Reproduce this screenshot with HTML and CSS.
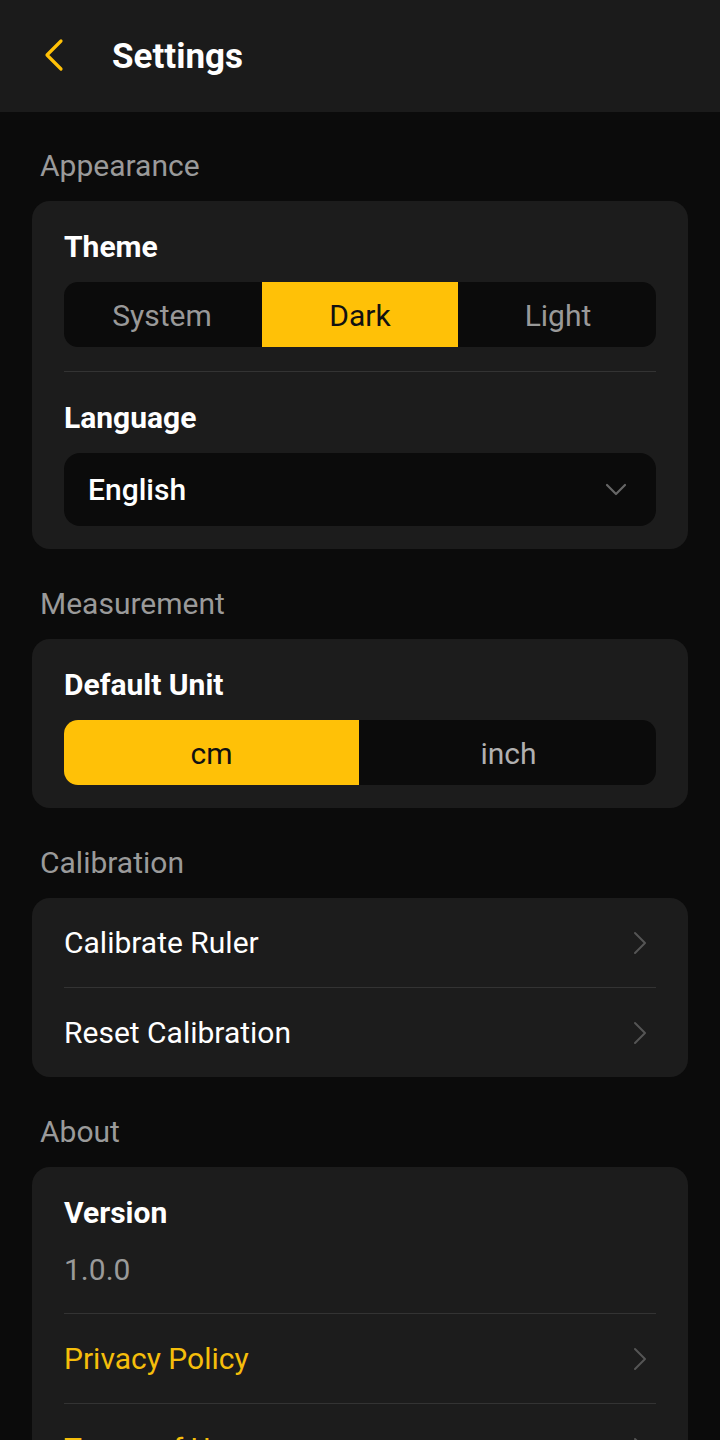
FILE: index.html
```html
<!DOCTYPE html>
<html lang="en">
<head>
  <meta charset="UTF-8">
  <meta name="viewport" content="width=device-width, initial-scale=1.0">
  <title>Settings</title>
  <link rel="stylesheet" href="styles.css">
</head>
<body>
  <header class="topbar">
    <a href="#" class="back">
      <svg width="24" height="36" viewBox="0 0 24 36">
        <polyline points="17,4 3,18 17,32" fill="none" stroke="#ffc107" stroke-width="3.2" stroke-linecap="round" stroke-linejoin="round"/>
      </svg>
    </a>
    <h1>Settings</h1>
  </header>

  <main class="content">
    <h3 class="section-label">Appearance</h3>
    <div class="card">
      <div class="card-title">Theme</div>
      <div class="segmented">
        <button class="seg">System</button>
        <button class="seg active">Dark</button>
        <button class="seg">Light</button>
      </div>
      <div class="divider"></div>
      <div class="card-title">Language</div>
      <div class="select">
        <span>English</span>
        <svg width="24" height="14" viewBox="0 0 24 14">
          <polyline points="3,2 12,11 21,2" fill="none" stroke="#666" stroke-width="2.2" stroke-linecap="round" stroke-linejoin="round"/>
        </svg>
      </div>
    </div>

    <h3 class="section-label">Measurement</h3>
    <div class="card">
      <div class="card-title">Default Unit</div>
      <div class="segmented">
        <button class="seg active">cm</button>
        <button class="seg light">inch</button>
      </div>
    </div>

    <h3 class="section-label">Calibration</h3>
    <div class="card list">
      <a href="#" class="row">
        <span>Calibrate Ruler</span>
        <svg class="chev" width="16" height="24" viewBox="0 0 16 24"><polyline points="3,2 13,12 3,22" fill="none" stroke="#555" stroke-width="2" stroke-linecap="round" stroke-linejoin="round"/></svg>
      </a>
      <div class="divider flat"></div>
      <a href="#" class="row">
        <span>Reset Calibration</span>
        <svg class="chev" width="16" height="24" viewBox="0 0 16 24"><polyline points="3,2 13,12 3,22" fill="none" stroke="#555" stroke-width="2" stroke-linecap="round" stroke-linejoin="round"/></svg>
      </a>
    </div>

    <h3 class="section-label">About</h3>
    <div class="card list about">
      <div class="card-title">Version</div>
      <div class="version">1.0.0</div>
      <div class="divider flat"></div>
      <a href="#" class="row link">
        <span>Privacy Policy</span>
        <svg class="chev" width="16" height="24" viewBox="0 0 16 24"><polyline points="3,2 13,12 3,22" fill="none" stroke="#555" stroke-width="2" stroke-linecap="round" stroke-linejoin="round"/></svg>
      </a>
      <div class="divider flat"></div>
      <a href="#" class="row link">
        <span>Terms of Use</span>
        <svg class="chev" width="16" height="24" viewBox="0 0 16 24"><polyline points="3,2 13,12 3,22" fill="none" stroke="#555" stroke-width="2" stroke-linecap="round" stroke-linejoin="round"/></svg>
      </a>
    </div>
  </main>
</body>
</html>
```

FILE: styles.css
```css
body {
  margin: 0;
  font-family: Roboto, 'Noto Sans', sans-serif;
  background: #0b0b0b;
  color: #fff;
}

.topbar {
  height: 112px;
  background: #1b1b1b;
  display: flex;
  align-items: center;
  padding-left: 44px;
}

.back {
  display: flex;
  margin-top: -2px;
}

.topbar h1 {
  margin: 0 0 0 44px;
  font-size: 35px;
  font-weight: 700;
  color: #fff;
}

.content {
  padding: 36px 32px 40px;
}

.section-label {
  margin: 0 0 17px 8px;
  font-size: 30px;
  line-height: 36px;
  font-weight: 400;
  color: #9a9a9a;
}

.card {
  background: #1c1c1c;
  border-radius: 18px;
  padding: 28px 32px 23px;
  margin-bottom: 37px;
}

.card.list {
  padding: 0 32px;
}

.card.about {
  padding-top: 28px;
}

.card-title {
  font-size: 30px;
  line-height: 36px;
  font-weight: 700;
  margin-bottom: 17px;
}

.segmented {
  display: flex;
  gap: 2px;
  height: 65px;
  background: #0b0b0b;
  border-radius: 14px;
  overflow: hidden;
}

.seg {
  flex: 1;
  border: none;
  background: transparent;
  font-family: inherit;
  font-size: 30px;
  color: #999;
  padding: 2px 0 0;
}

.seg.light {
  color: #b0b0b0;
}

.seg.active {
  background: #ffc107;
  color: #111;
}

.divider {
  height: 1px;
  background: #333;
  margin: 24px 0 28px;
}

.divider.flat {
  margin: 0;
}

.select {
  height: 73px;
  background: #0b0b0b;
  border-radius: 16px;
  display: flex;
  align-items: center;
  justify-content: space-between;
  padding: 0 28px 0 24px;
  font-size: 30px;
  font-weight: 500;
}

.row {
  height: 89px;
  display: flex;
  align-items: center;
  justify-content: space-between;
  color: #fff;
  text-decoration: none;
  font-size: 30px;
}

.row .chev {
  margin-right: 8px;
}

.row.link {
  color: #f5be0b;
}

.version {
  font-size: 30px;
  line-height: 36px;
  color: #9a9a9a;
  margin: 21px 0 25px;
}
```
